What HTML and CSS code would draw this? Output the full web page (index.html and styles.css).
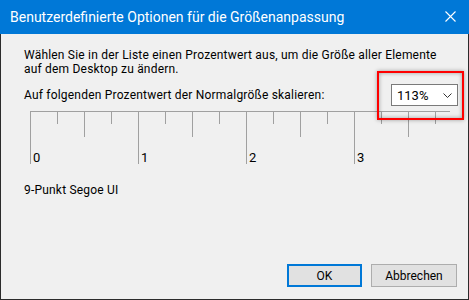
FILE: index.html
```html
<!DOCTYPE html>
<html lang="de">
<head>
<meta charset="utf-8">
<title>Benutzerdefinierte Optionen für die Größenanpassung</title>
<link rel="stylesheet" href="styles.css">
</head>
<body>
<div class="window">
  <div class="titlebar">
    <span class="title">Benutzerdefinierte Optionen für die Größenanpassung</span>
    <svg class="close" width="11" height="11" viewBox="0 0 11 11"><path d="M0.5 0.5 L10.5 10.5 M10.5 0.5 L0.5 10.5" stroke="#fff" stroke-width="1.1" fill="none"/></svg>
  </div>
  <div class="content">
    <p class="intro">Wählen Sie in der Liste einen Prozentwert aus, um die Größe aller Elemente<br>auf dem Desktop zu ändern.</p>
    <div class="scale-row">
      <span class="label">Auf folgenden Prozentwert der Normalgröße skalieren:</span>
      <div class="combo">
        <span class="combo-value">113%</span>
        <svg class="chevron" width="9" height="5" viewBox="0 0 9 5"><path d="M0.5 0.5 L4.5 4.5 L8.5 0.5" stroke="#333" stroke-width="1" fill="none"/></svg>
      </div>
    </div>
    <svg class="ruler" width="432" height="62" viewBox="0 0 432 62">
      <g stroke="#a0a0a0" stroke-width="1" fill="none">
        <path d="M5 5.5 H425"/>
        <path d="M5.5 5 V58 M32.5 5 V18 M59.5 5 V31 M86.5 5 V18 M113.5 5 V58 M140.5 5 V18 M167.5 5 V31 M194.5 5 V18 M221.5 5 V58 M248.5 5 V18 M275.5 5 V31 M302.5 5 V18 M329.5 5 V58 M356.5 5 V18 M383.5 5 V31 M410.5 5 V18"/>
      </g>
      <g class="ruler-num">
        <text x="8" y="56">0</text>
        <text x="116" y="56">1</text>
        <text x="224" y="56">2</text>
        <text x="332" y="56">3</text>
      </g>
    </svg>
    <p class="sample">9-Punkt Segoe UI</p>
  </div>
  <div class="footer">
    <button class="btn btn-default">OK</button>
    <button class="btn btn-wide">Abbrechen</button>
  </div>
  <div class="highlight"></div>
</div>
</body>
</html>
```
FILE: styles.css
```css
html, body {
  margin: 0;
  padding: 0;
}
body {
  width: 469px;
  height: 300px;
  overflow: hidden;
  font-family: Roboto, "Noto Sans", sans-serif;
  font-size: 12px;
  color: #000;
}
.window {
  position: relative;
  box-sizing: border-box;
  width: 469px;
  height: 300px;
  background: #f0f0f0;
  border: 1px solid #2b2b2b;
  border-top: none;
  display: flex;
  flex-direction: column;
}
.titlebar {
  height: 34px;
  margin: 0 -1px;
  background: #0078d7;
  color: #fff;
  display: flex;
  align-items: center;
  justify-content: space-between;
  padding: 0 13px 0 10px;
  font-size: 14px;
  flex: none;
}
.title {
  line-height: 20px;
  margin-top: -1px;
}
.close {
  display: block;
  margin-top: -2px;
}
.content {
  flex: 1;
  padding: 0 10px 0 23px;
  letter-spacing: 0.2px;
}
.intro {
  margin: 14px 0 0;
  line-height: 14px;
}
.scale-row {
  margin-top: 8px;
  display: flex;
  align-items: center;
  justify-content: space-between;
  height: 22px;
}
.combo {
  box-sizing: border-box;
  width: 67px;
  height: 22px;
  background: #fff;
  border: 1px solid #7a7a7a;
  display: flex;
  align-items: center;
  justify-content: space-between;
  padding: 0 5px 0 5px;
  letter-spacing: 0;
}
.combo-value {
  font-size: 13px;
}
.ruler {
  display: block;
  margin: 0 0 0 1px;
}
.ruler-num text {
  font-family: Roboto, "Noto Sans", sans-serif;
  font-size: 13px;
  fill: #000;
}
.sample {
  margin: 14px 0 0;
  font-size: 12px;
  line-height: 16px;
}
.footer {
  display: flex;
  justify-content: flex-end;
  gap: 9px;
  padding: 0 11px 12px 0;
  flex: none;
}
.btn {
  box-sizing: border-box;
  width: 75px;
  height: 23px;
  margin: 0;
  padding: 0;
  background: #e1e1e1;
  border: 1px solid #adadad;
  font-family: Roboto, "Noto Sans", sans-serif;
  font-size: 12px;
  color: #000;
}
.btn-default {
  border: 2px solid #0078d7;
}
.btn-wide {
  width: 86px;
}
.highlight {
  position: absolute;
  left: 376px;
  top: 71px;
  width: 87px;
  height: 49px;
  box-sizing: border-box;
  border: 2px solid #ff0000;
  box-shadow: 0 0 4px rgba(0, 0, 0, 0.35), inset 0 0 4px rgba(0, 0, 0, 0.35);
}
```
